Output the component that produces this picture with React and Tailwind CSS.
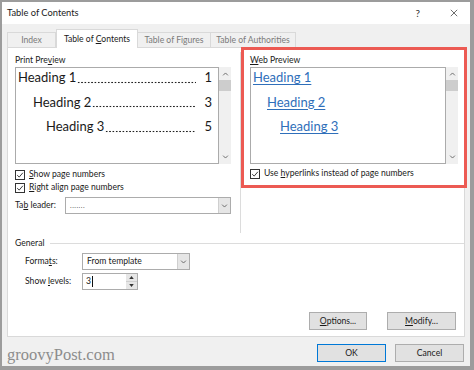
import React from 'react'

// ─── Small pieces ─────────────────────────────────────────────────────────────

function U({ children }) {
  return <span className="underline underline-offset-[1px]">{children}</span>
}

function Checkbox({ children }) {
  return (
    <div className="flex h-[13px] items-center gap-[4px]">
      <span className="flex h-[10px] w-[10px] shrink-0 items-center justify-center border border-[#333] bg-white">
        <svg viewBox="0 0 10 10" className="h-[8px] w-[8px]" fill="none" stroke="#222" strokeWidth="1.1">
          <path d="M1.5 5.2 L4 7.6 L8.6 2.2" />
        </svg>
      </span>
      <span className="text-[8.6px] leading-[13px] text-[#1a1a1a]">{children}</span>
    </div>
  )
}

function Chevron({ up = false, className = '' }) {
  return (
    <svg viewBox="0 0 8 5" className={`h-[4px] w-[7px] ${className}`} fill="none" stroke="#606060" strokeWidth="1.1">
      <path d={up ? 'M1 4.2 L4 1.2 L7 4.2' : 'M1 0.8 L4 3.8 L7 0.8'} />
    </svg>
  )
}

function Scrollbar() {
  return (
    <div className="flex h-full w-[12px] shrink-0 flex-col items-center bg-[#f0f0f0] pt-[5px]">
      <Chevron up />
      <div className="mt-[4px] h-[11px] w-[12px] bg-[#cdcdcd]" />
      <div className="flex-1" />
      <Chevron className="mb-[5px]" />
    </div>
  )
}

function Select({ width, children }) {
  return (
    <div className={`flex h-[17px] ${width} min-w-0 items-stretch border border-[#acacac] bg-white`}>
      <div className="flex flex-1 items-center pl-[4px] text-[8.6px] text-[#1a1a1a]">{children}</div>
      <div className="flex w-[12px] items-center justify-center border-l border-[#cfcfcf] bg-[#e6e6e6]">
        <Chevron />
      </div>
    </div>
  )
}

function Button({ width, primary = false, children }) {
  return (
    <div
      className={`flex h-[18px] ${width} items-center justify-center border bg-[#e1e1e1] text-[8.6px] text-[#1a1a1a] ${
        primary ? 'border-[#0078d7]' : 'border-[#adadad]'
      }`}
    >
      <span>{children}</span>
    </div>
  )
}

// dot leader drawn as a repeating dot pattern along the baseline
function PrintRow({ indent, label, page }) {
  return (
    <div className={`flex h-[16px] min-w-0 items-center ${indent} pr-[6px] text-[13px] leading-[16px] text-[#1a1a1a]`}>
      <span className="shrink-0 whitespace-nowrap">{label}</span>
      <span className="ml-[1px] mr-[8px] h-[16px] min-w-0 flex-1 bg-[radial-gradient(circle,#222_0.7px,transparent_1.1px)] bg-[length:3.35px_3px] bg-[position:0_11.6px] bg-repeat-x" />
      <span className="shrink-0">{page}</span>
    </div>
  )
}

function WebRow({ indent, label }) {
  return (
    <div className={`flex h-[16px] items-center ${indent} text-[13px] leading-[16px] text-[#2f6fba]`}>
      <span className="underline underline-offset-[2px]">{label}</span>
    </div>
  )
}

// ─── Dialog ──────────────────────────────────────────────────────────────────

export default function App() {
  return (
    <div className="flex h-[370px] w-[474px] flex-col overflow-hidden border-t-2 border-l-2 border-r-4 border-b-4 border-[#9c9c9c] bg-[#f0f0f0] [font-family:Lato,'Noto_Sans',sans-serif]">
      {/* Title bar */}
      <div className="flex h-[22px] shrink-0 items-center bg-white pl-[5px] pr-[12px] text-[9.3px] text-[#1a1a1a]">
        <span className="flex-1">Table of Contents</span>
        <span className="mr-[30px] text-[10px] text-[#333]">?</span>
        <svg viewBox="0 0 10 10" className="h-[8px] w-[8px]" fill="none" stroke="#333" strokeWidth="0.9">
          <path d="M1 1 L9 9 M9 1 L1 9" />
        </svg>
      </div>

      <div className="flex flex-1 flex-col px-[5px]">
        {/* Tabs */}
        <div className="flex h-[23px] shrink-0 items-end text-[8.6px]">
          <div className="flex h-[15px] w-[49px] items-center justify-center border border-b-0 border-[#d9d9d9] text-[#7a7a7a]">Index</div>
          <div className="relative z-10 -mb-px flex h-[19px] w-[82px] items-center justify-center border border-b-0 border-[#d9d9d9] bg-white text-[#1a1a1a]">
            <span>Table of <U>C</U>ontents</span>
          </div>
          <div className="flex h-[15px] w-[73px] items-center justify-center border border-l-0 border-b-0 border-[#d9d9d9] text-[#7a7a7a]">Table of Figures</div>
          <div className="flex h-[15px] w-[85px] items-center justify-center border border-l-0 border-b-0 border-[#d9d9d9] text-[#7a7a7a]">Table of Authorities</div>
        </div>

        {/* Panel */}
        <div className="relative flex h-[290px] shrink-0 flex-col border border-[#d9d9d9] bg-white text-[8.6px] text-[#1a1a1a]">
          <div className="flex items-start">
            {/* Print preview column */}
            <div className="ml-[7px] flex w-[216px] shrink-0 flex-col pt-[6px]">
              <div className="h-[12px] leading-[12px]">Print Pre<U>v</U>iew</div>
              <div className="mt-[1px] flex h-[97px]">
                <div className="flex min-w-0 flex-1 flex-col gap-[8.5px] overflow-hidden border border-[#ababab] pt-[1px] pl-[1px]">
                  <PrintRow indent="pl-[1px]" label="Heading 1" page="1" />
                  <PrintRow indent="pl-[16px]" label="Heading 2" page="3" />
                  <PrintRow indent="pl-[29px]" label="Heading 3" page="5" />
                </div>
                <Scrollbar />
              </div>
              <div className="mt-[4px]">
                <Checkbox><U>S</U>how page numbers</Checkbox>
                <Checkbox><U>R</U>ight align page numbers</Checkbox>
              </div>
              <div className="mt-[3px] flex items-center">
                <span className="w-[50px] shrink-0">Ta<U>b</U> leader:</span>
                <Select width="flex-1">
                  <span className="text-[7px] tracking-[0.5px] text-[#555]">.......</span>
                </Select>
              </div>
            </div>

            {/* Separator */}
            <div className="ml-[9px] mt-[4px] h-[181px] w-px shrink-0 bg-[#dcdcdc]" />

            {/* Web preview column */}
            <div className="ml-[9px] flex w-[208px] shrink-0 flex-col pt-[6px]">
              <div className="h-[12px] leading-[12px]"><U>W</U>eb Preview</div>
              <div className="mt-[1px] flex h-[97px]">
                <div className="flex min-w-0 flex-1 flex-col gap-[8.5px] overflow-hidden border border-[#ababab] pt-[1px] pl-[1px]">
                  <WebRow indent="pl-[1px]" label="Heading 1" />
                  <WebRow indent="pl-[15px]" label="Heading 2" />
                  <WebRow indent="pl-[28px]" label="Heading 3" />
                </div>
                <Scrollbar />
              </div>
              <div className="mt-[3px]">
                <Checkbox>Use <U>h</U>yperlinks instead of page numbers</Checkbox>
              </div>
            </div>
          </div>

          {/* General group */}
          <div className="ml-[7px] mt-[4px] flex h-[12px] items-center">
            <span>General</span>
            <div className="ml-[6px] h-px flex-1 bg-[#dcdcdc]" />
          </div>
          <div className="ml-[17px] mt-[4px] flex items-center">
            <span className="w-[57px]">Forma<U>t</U>s:</span>
            <Select width="w-[108px]">From template</Select>
          </div>
          <div className="ml-[17px] mt-[3px] flex items-center">
            <span className="w-[57px]">Show <U>l</U>evels:</span>
            <div className="flex h-[17px] w-[56px] items-stretch border border-[#acacac] bg-white">
              <div className="flex flex-1 items-center pl-[3px]">
                <span>3</span>
                <span className="ml-px h-[11px] w-px bg-[#111]" />
              </div>
              <div className="flex w-[11px] flex-col">
                <div className="flex flex-1 items-center justify-center border-b border-[#cfcfcf] bg-[#e6e6e6]">
                  <svg viewBox="0 0 6 4" className="h-[3px] w-[5px]"><path d="M0 4 L3 0 L6 4 Z" fill="#333" /></svg>
                </div>
                <div className="flex flex-1 items-center justify-center bg-[#e6e6e6]">
                  <svg viewBox="0 0 6 4" className="h-[3px] w-[5px]"><path d="M0 0 L3 4 L6 0 Z" fill="#333" /></svg>
                </div>
              </div>
            </div>
          </div>

          <div className="mr-[8px] mt-[22px] flex justify-end gap-[20px]">
            <Button width="w-[58px]"><U>O</U>ptions...</Button>
            <Button width="w-[69px]"><U>M</U>odify...</Button>
          </div>

          {/* Annotation highlight */}
          <div className="pointer-events-none absolute left-[233px] top-[-1px] h-[141px] w-[226px] border-[3px] border-[#ec5a53]" />
        </div>

        {/* Footer */}
        <div className="mt-[7px] flex items-start">
          <span className="flex-1 pt-[2px] text-[16.5px] leading-[18px] text-[#8c8c8c] [font-family:'Liberation_Serif',serif]">groovyPost.com</span>
          <Button width="w-[69px]" primary>OK</Button>
          <div className="w-[9px]" />
          <Button width="w-[69px]">Cancel</Button>
          <div className="w-[1px]" />
        </div>
      </div>
    </div>
  )
}
